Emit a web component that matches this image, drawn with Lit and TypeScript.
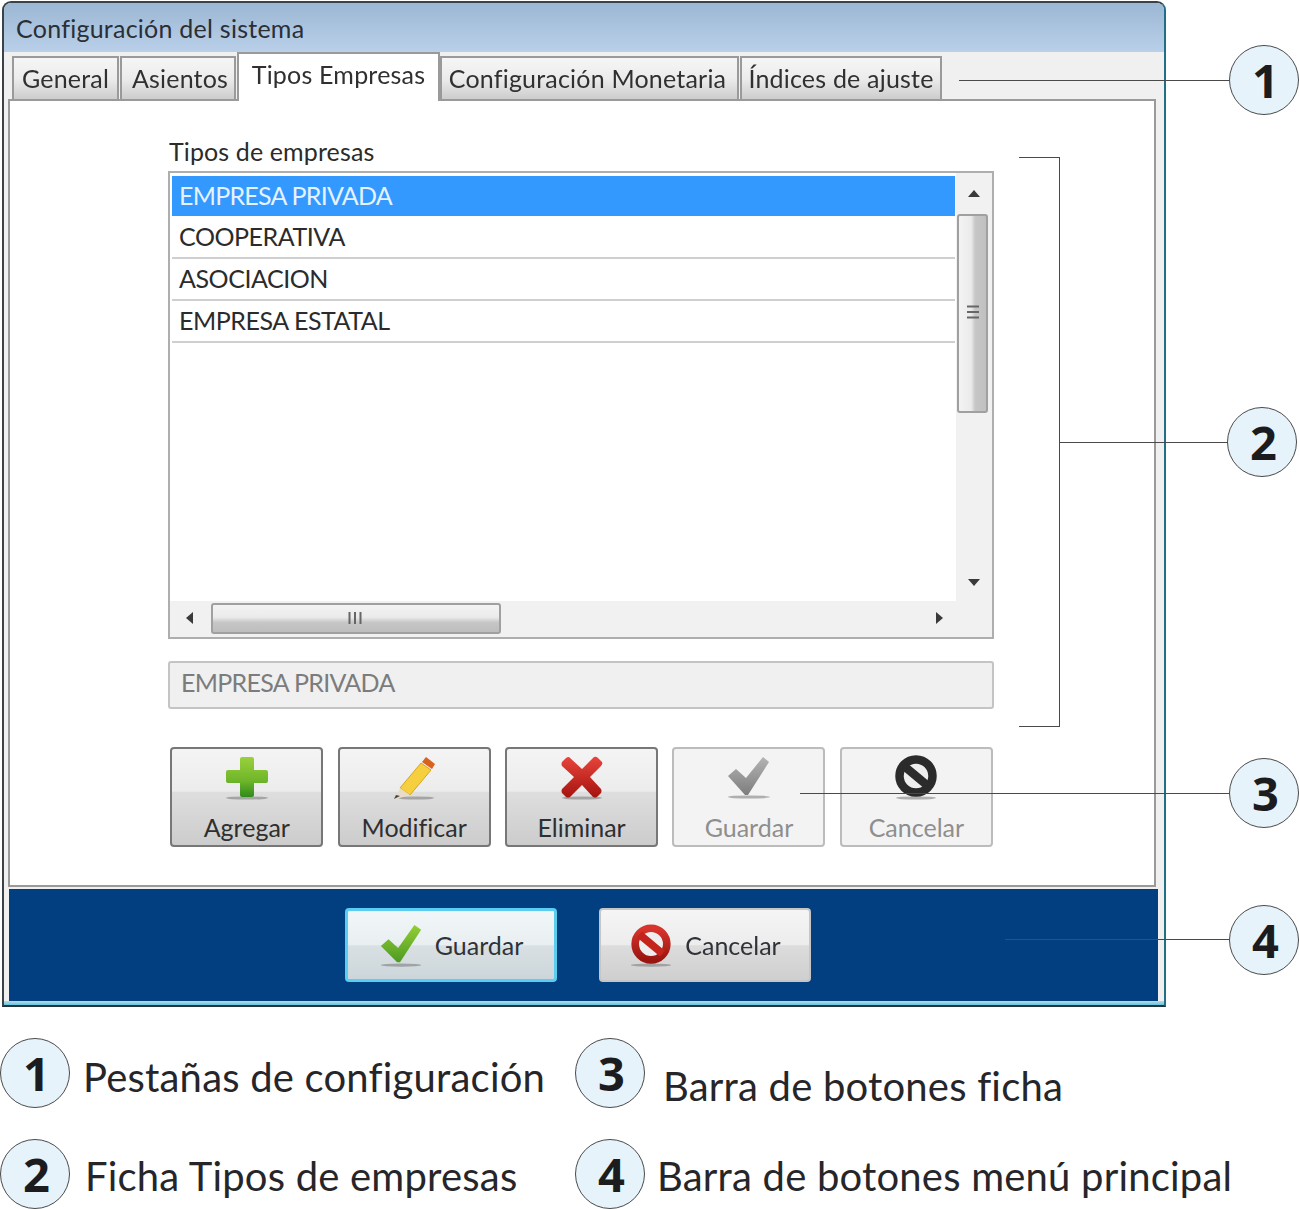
import { LitElement, html, css, svg } from "lit";
import { customElement } from "lit/decorators.js";

const shadow = (cx: number, cy: number, rx: number) =>
  svg`<ellipse cx=${cx} cy=${cy} rx=${rx} ry="1.6" fill="#777" opacity=".55"/>`;

const icons = {
  plus: html`<svg viewBox="0 0 48 48" class="ico"><defs><linearGradient id="gp" x1="0" y1="0" x2="0" y2="1"><stop offset="0" stop-color="#9ad03c"/><stop offset=".6" stop-color="#6fb52a"/><stop offset="1" stop-color="#2f8a1c"/></linearGradient></defs>
    ${shadow(24, 44, 21)}<path d="M17 5q0-2 2-2h10q2 0 2 2v11h12q2 0 2 2v9q0 2-2 2H31v12q0 2-2 2H19q-2 0-2-2V29H5q-2 0-2-2v-9q0-2 2-2h12z" fill="url(#gp)"/></svg>`,
  pencil: html`<svg viewBox="0 0 48 48" class="ico">${shadow(26, 44, 18)}
    <path d="M36 3l9 7-3 5-10-7z" fill="#d9621c"/><path d="M31 9l10 7-21 25-10-7z" fill="#f6cf3e" stroke="#d9a520" stroke-width="1"/><path d="M10 34l10 7-14 4z" fill="#e8dcc4"/><path d="M6 41l4 1-6 3z" fill="#444"/></svg>`,
  x: html`<svg viewBox="0 0 48 48" class="ico"><defs><linearGradient id="gx" x1="0" y1="0" x2="0" y2="1"><stop offset="0" stop-color="#e8443a"/><stop offset="1" stop-color="#a5140f"/></linearGradient></defs>${shadow(24, 44, 20)}
    <path d="M11 3l13 12L36 3q2-1 4 1l4 4q1 2-1 4L32 23l11 12q1 2 0 4l-4 4q-2 1-4 0L24 31 12 43q-2 1-4 0l-4-4q-1-2 0-4l12-12L4 12Q3 10 4 8l4-4q1-1 3-1z" fill="url(#gx)"/></svg>`,
  checkGray: html`<svg viewBox="0 0 48 48" class="ico"><defs><linearGradient id="gc" x1="0" y1="0" x2="0" y2="1"><stop offset="0" stop-color="#b4b4b4"/><stop offset="1" stop-color="#7d7d7d"/></linearGradient></defs>${shadow(24, 43, 21)}
    <path d="M3 22l8-7 10 9L38 3l6 5-21 33h-3z" fill="url(#gc)"/></svg>`,
  noBlack: html`<svg viewBox="0 0 48 48" class="ico">${shadow(24, 44, 20)}
    <circle cx="24" cy="22" r="16.500" fill="#eee" stroke="#2b2b2b" stroke-width="8.500"/><path d="M12 12l24 20" stroke="#2b2b2b" stroke-width="8.500"/></svg>`,
  checkGreen: html`<svg viewBox="0 0 48 48" class="ico"><defs><linearGradient id="gg" x1="0" y1="0" x2="0" y2="1"><stop offset="0" stop-color="#93cf35"/><stop offset="1" stop-color="#4d9a22"/></linearGradient></defs>${shadow(24, 45, 21)}
    <path d="M3 25l8-7 10 9L38 3l7 5-22 34h-3z" fill="url(#gg)"/></svg>`,
  noRed: html`<svg viewBox="0 0 48 48" class="ico"><defs><linearGradient id="gr" x1="0" y1="0" x2="0" y2="1"><stop offset="0" stop-color="#d8342c"/><stop offset="1" stop-color="#98160f"/></linearGradient></defs>${shadow(24, 45, 21)}
    <circle cx="24" cy="23" r="16.500" fill="#eee" stroke="url(#gr)" stroke-width="8"/><path d="M12 13l24 20" stroke="#c4241c" stroke-width="8"/></svg>`,
};

const tabs = [
  { t: "General", w: 107, cls: "" },
  { t: "Asientos", w: 116, cls: "nudge-r" },
  { t: "Tipos Empresas", w: 203, cls: "active" },
  { t: "Configuración Monetaria", w: 299, cls: "nudge-l" },
  { t: "Índices de ajuste", w: 202, cls: "" },
];
const rows = ["EMPRESA PRIVADA", "COOPERATIVA", "ASOCIACION", "EMPRESA ESTATAL"];
const actions = [
  { t: "Agregar", i: icons.plus },
  { t: "Modificar", i: icons.pencil },
  { t: "Eliminar", i: icons.x },
  { t: "Guardar", i: icons.checkGray, off: true },
  { t: "Cancelar", i: icons.noBlack, off: true },
];

@customElement("app-root")
export class AppRoot extends LitElement {
  static styles = css`
    :host { display: block; position: relative; width: 1299px; height: 1209px; background: #fff; overflow: hidden; font-family: "Lato", "Open Sans", sans-serif; color: #2b2b2b; font-variant-ligatures: none; }
    .window { box-sizing: border-box; width: 1164px; height: 1006px; margin: 1px 0 0 2px; border: 2px solid #3c4348; border-right-color: #1f6f86; border-bottom-color: #23343c; border-radius: 9px 9px 0 0; display: flex; flex-direction: column; background: #f0f0f0; overflow: hidden; filter: blur(.5px); }
    .title { height: 49px; flex: none; box-sizing: border-box; padding: 8px 0 0 12px; background: linear-gradient(#9bb7d3, #bad0e9); font-size: 25px; line-height: 34px; color: #2a2f36; letter-spacing: .25px; }
    .tabs { height: 47px; flex: none; display: flex; align-items: flex-end; padding-left: 8px; box-sizing: border-box; position: relative; z-index: 1; }
    .tab { box-sizing: border-box; height: 43px; border: 2px solid #9a9a9a; border-bottom: none; background: linear-gradient(#f6f6f6 0%, #ececec 50%, #cdcdcd 100%); display: flex; justify-content: center; align-items: center; font-size: 25px; color: #303030; margin-right: 1px; white-space: nowrap; padding-bottom: 2px; letter-spacing: .2px; }
    .tab.active { height: 49px; margin: 0 0 -2px 0; background: #fff; padding-bottom: 8px; }
    .tab.nudge-r { padding-left: 4px; }
    .tab.nudge-l { padding-right: 4px; }
    .panel { box-sizing: border-box; width: 1148px; height: 788px; flex: none; margin-left: 4px; border: 2px solid #9a9a9a; background: #fff; padding: 34px 0 0 158px; }
    .label { font-size: 25px; line-height: 32px; height: 36px; color: #2b2b2b; padding-left: 1px; letter-spacing: .12px; box-sizing: border-box; }
    .list { box-sizing: border-box; width: 826px; height: 468px; border: 2px solid #aeaeae; background: #fff; display: grid; grid-template-columns: 1fr 36px; grid-template-rows: 1fr 36px; }
    .rows { padding: 3px 0 0 2px; }
    .row { box-sizing: border-box; height: 42px; border-bottom: 2px solid #cfcfcf; font-size: 25px; line-height: 39px; padding-left: 7px; color: #2b2b2b; margin-right: 1px; letter-spacing: -.45px; }
    .row.sel { background: #3399ff; color: #e6f2ff; height: 40px; border: none; line-height: 38px; letter-spacing: -.75px; }
    .row.sel + .row { height: 43px; line-height: 41px; }
    .vbar { background: #f1f1f1; display: flex; flex-direction: column; align-items: center; }
    .vthumb { box-sizing: border-box; width: 31px; height: 199px; border: 2px solid #a0a0a0; border-radius: 3px; background: linear-gradient(90deg, #f3f3f3 0%, #ebebeb 45%, #c6c6c6 60%, #c0c0c0 100%); display: flex; align-items: center; justify-content: center; margin: 0 3px 0 0; padding-bottom: 4px; }
    .arrow-box { height: 41px; display: flex; align-items: center; justify-content: center; flex: none; padding-right: 1px; }
    .arrow-box.dn { height: 37px; }
    .grow { flex: 1; }
    .hbar { background: #f1f1f1; display: flex; align-items: center; padding: 0 12px 2px 0; }
    .hthumb { box-sizing: border-box; width: 290px; height: 31px; border: 2px solid #a0a0a0; border-radius: 3px; background: linear-gradient(#f3f3f3 0%, #ebebeb 45%, #c6c6c6 65%, #bebebe 100%); display: flex; align-items: center; justify-content: center; padding-right: 3px; }
    .corner { background: #f1f1f1; }
    .arrow-l { margin: 0 17px 0 15px; display: flex; }
    .input { box-sizing: border-box; width: 826px; height: 48px; margin-top: 22px; border: 2px solid #c4c4c4; border-radius: 3px; background: #f0f0f0; font-size: 25px; line-height: 39px; padding-left: 11px; color: #7c7c7c; letter-spacing: -.7px; }
    .actions { display: flex; gap: 14.4px; margin: 38px 0 0 2.3px; }
    .act { box-sizing: border-box; width: 153px; height: 100px; border: 2px solid #777; border-radius: 4px; background: linear-gradient(#f4f4f4 0%, #ececec 44%, #dedede 45%, #cccccc 100%); display: flex; flex-direction: column; align-items: center; padding-top: 5px; font-size: 25px; color: #2f2f2f; }
    .act.off { border-color: #bcbcbc; background: #f3f3f3; color: #8e8e8e; }
    .act .ico { width: 48px; height: 48px; flex: none; }
    .act span { margin-top: 5px; line-height: 40px; }
    .footer { height: 112px; flex: none; margin: 2px 6px 0 5px; background: #023f80; display: flex; justify-content: center; align-items: flex-start; gap: 42px; padding: 19px 12px 0 0; box-sizing: border-box; }
    .window-bottom { flex: 1; background: linear-gradient(#c5d5e6, #5cc8e0); }
    .btn { box-sizing: border-box; width: 212px; height: 74px; border: 2px solid #c6c6c6; border-radius: 4px; background: linear-gradient(#f5f5f5 0%, #ececec 50%, #dcdcdc 51%, #cfcfcf 100%); display: flex; align-items: center; justify-content: center; gap: 11px; font-size: 25px; color: #2f3338; }
    .btn.focus { border: 3px solid #5bcdf0; background: linear-gradient(#f1f6f8 0%, #e9eef0 50%, #d9e0e3 51%, #ccd6da 100%); }
    .btn .ico { width: 46px; height: 46px; flex: none; }

    .num { box-sizing: border-box; flex: none; width: 70px; height: 70px; border: 1.5px solid #4a4a4a; border-radius: 50%; background: #e6f3fb; display: flex; align-items: center; justify-content: center; padding-left: 3px; font-family: "Open Sans", sans-serif; font-weight: 700; font-size: 47px; line-height: 1; color: #1c1c1e; }
    .callout { position: absolute; }
    .hline { position: absolute; height: 1px; background: #4a4a4a; }
    .bracket { position: absolute; left: 1019px; top: 157px; width: 41px; height: 570px; box-sizing: border-box; border: 1px solid #4a4a4a; border-left: none; }

    .legend { position: absolute; left: 0; top: 1038px; width: 1299px; display: grid; grid-template-columns: 575px 1fr; row-gap: 31px; }
    .item { display: flex; align-items: center; height: 70px; font-size: 40px; line-height: 40px; letter-spacing: .2px; color: #26262a; white-space: nowrap; }
    .t1 { margin-left: 13px; padding-top: 8px; }
    .t2 { margin-left: 15px; padding-top: 4px; }
    .t3 { margin-left: 18px; padding-top: 26px; }
    .t4 { margin-left: 12px; padding-top: 4px; }
  `;

  private num(n: number) {
    return html`<div class="num">${n}</div>`;
  }

  render() {
    const up = html`<svg width="14" height="9" viewBox="0 0 14 9"><path d="M7 1l6 7H1z" fill="#3a3a3a"/></svg>`;
    const down = html`<svg width="14" height="9" viewBox="0 0 14 9"><path d="M7 8L1 1h12z" fill="#3a3a3a"/></svg>`;
    const left = html`<svg width="9" height="14" viewBox="0 0 9 14"><path d="M1 7l7-6v12z" fill="#3a3a3a"/></svg>`;
    const right = html`<svg width="9" height="14" viewBox="0 0 9 14"><path d="M8 7L1 1v12z" fill="#3a3a3a"/></svg>`;
    const gripH = html`<svg width="14" height="14" viewBox="0 0 14 14"><path d="M1.500 1v12M7 1v12M12.500 1v12" stroke="#666" stroke-width="2"/></svg>`;
    const gripV = html`<svg width="14" height="14" viewBox="0 0 14 14"><path d="M1 1.500h12M1 7h12M1 12.500h12" stroke="#666" stroke-width="2"/></svg>`;
    return html`
      <div class="window">
        <div class="title">Configuración del sistema</div>
        <div class="tabs">
          ${tabs.map((t) => html`<div class="tab ${t.cls}" style="width:${t.w}px">${t.t}</div>`)}
        </div>
        <div class="panel">
          <div class="label">Tipos de empresas</div>
          <div class="list">
            <div class="rows">
              ${rows.map((r, i) => html`<div class="row ${i === 0 ? "sel" : ""}">${r}</div>`)}
            </div>
            <div class="vbar">
              <div class="arrow-box">${up}</div>
              <div class="vthumb">${gripV}</div>
              <div class="grow"></div>
              <div class="arrow-box dn">${down}</div>
            </div>
            <div class="hbar">
              <div class="arrow-l">${left}</div>
              <div class="hthumb">${gripH}</div>
              <div class="grow"></div>
              ${right}
            </div>
            <div class="corner"></div>
          </div>
          <div class="input">EMPRESA PRIVADA</div>
          <div class="actions">
            ${actions.map((a) => html`<div class="act ${a.off ? "off" : ""}">${a.i}<span>${a.t}</span></div>`)}
          </div>
        </div>
        <div class="footer">
          <div class="btn focus">${icons.checkGreen}<span>Guardar</span></div>
          <div class="btn">${icons.noRed}<span>Cancelar</span></div>
        </div>
        <div class="window-bottom"></div>
      </div>

      <div class="hline" style="left:959px;top:80px;width:270px"></div>
      <div class="callout" style="left:1229px;top:45px">${this.num(1)}</div>
      <div class="bracket"></div>
      <div class="hline" style="left:1059px;top:442px;width:168px"></div>
      <div class="callout" style="left:1227px;top:407px">${this.num(2)}</div>
      <div class="hline" style="left:800px;top:793px;width:429px"></div>
      <div class="callout" style="left:1229px;top:758px">${this.num(3)}</div>
      <div class="hline" style="left:1005px;top:939px;width:224px"></div>
      <div class="callout" style="left:1229px;top:905px">${this.num(4)}</div>

      <div class="legend">
        <div class="item">${this.num(1)}<span class="t1">Pestañas de configuración</span></div>
        <div class="item">${this.num(3)}<span class="t3">Barra de botones ficha</span></div>
        <div class="item">${this.num(2)}<span class="t2">Ficha Tipos de empresas</span></div>
        <div class="item">${this.num(4)}<span class="t4">Barra de botones menú principal</span></div>
      </div>
    `;
  }
}
